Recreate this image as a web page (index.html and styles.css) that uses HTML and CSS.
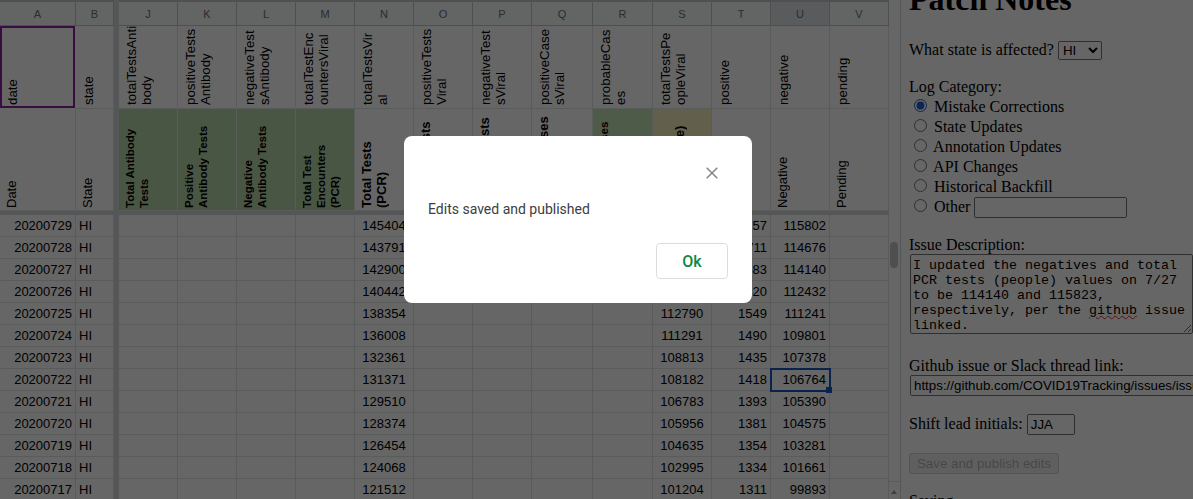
FILE: index.html
```html
<!DOCTYPE html>
<html lang="en-US">
<head>
  <meta charset="utf-8">
  <title>Patch Notes</title>
  <link rel="stylesheet" href="styles.css">
</head>
<body>
  <div class="page">
    <table class="sheet">
      <colgroup>
        <col class="c-a"><col class="c-b"><col class="c-bar">
        <col class="c-n"><col class="c-n"><col class="c-n"><col class="c-n"><col class="c-n"><col class="c-n"><col class="c-n">
        <col class="c-q"><col class="c-r"><col class="c-n"><col class="c-n"><col class="c-n"><col class="c-n">
      </colgroup>
      <tr class="letters">
        <td>A</td><td>B</td><td class="bar"></td><td>J</td><td>K</td><td>L</td><td>M</td><td>N</td><td>O</td><td>P</td><td>Q</td><td>R</td><td>S</td><td>T</td><td class="active">U</td><td>V</td>
      </tr>
      <tr class="keys">
        <td class="picked"><div class="rot">date</div></td>
        <td><div class="rot">state</div></td>
        <td class="bar"></td>
        <td><div class="rot">totalTestsAnti<br>body</div></td>
        <td><div class="rot">positiveTests<br>Antibody</div></td>
        <td><div class="rot">negativeTest<br>sAntibody</div></td>
        <td><div class="rot">totalTestEnc<br>ountersViral</div></td>
        <td><div class="rot">totalTestsVir<br>al</div></td>
        <td><div class="rot">positiveTests<br>Viral</div></td>
        <td><div class="rot">negativeTest<br>sViral</div></td>
        <td><div class="rot">positiveCase<br>sViral</div></td>
        <td><div class="rot">probableCas<br>es</div></td>
        <td><div class="rot">totalTestsPe<br>opleViral</div></td>
        <td><div class="rot">positive</div></td>
        <td><div class="rot">negative</div></td>
        <td><div class="rot">pending</div></td>
      </tr>
      <tr class="titles">
        <td><div class="rot">Date</div></td>
        <td><div class="rot">State</div></td>
        <td class="bar"></td>
        <td class="green"><div class="rot small">Total Antibody<br>Tests</div></td>
        <td class="green"><div class="rot small">Positive<br>Antibody Tests</div></td>
        <td class="green"><div class="rot small">Negative<br>Antibody Tests</div></td>
        <td class="green"><div class="rot small">Total Test<br>Encounters<br>(PCR)</div></td>
        <td><div class="rot bold">Total Tests<br>(PCR)</div></td>
        <td><div class="rot bold">Positive Tests</div></td>
        <td><div class="rot bold">Negative Tests</div></td>
        <td><div class="rot bold">Positive Cases</div></td>
        <td class="green light"><div class="rot small">Probable Cases</div></td>
        <td class="sand"><div class="rot bold">Total Tests<br>(PCR People)</div></td>
        <td><div class="rot">Positive</div></td>
        <td><div class="rot">Negative</div></td>
        <td><div class="rot">Pending</div></td>
      </tr>
      <tr class="freeze">
        <td class="bar" colspan="16"></td>
      </tr>
      <tr><td class="num">20200729</td><td>HI</td><td class="bar"></td><td></td><td></td><td></td><td></td><td class="mid">145404</td><td></td><td></td><td></td><td></td><td></td><td class="num">1757</td><td class="num">115802</td><td></td></tr>
      <tr><td class="num">20200728</td><td>HI</td><td class="bar"></td><td></td><td></td><td></td><td></td><td class="mid">143791</td><td></td><td></td><td></td><td></td><td></td><td class="num">1711</td><td class="num">114676</td><td></td></tr>
      <tr><td class="num">20200727</td><td>HI</td><td class="bar"></td><td></td><td></td><td></td><td></td><td class="mid">142900</td><td></td><td></td><td></td><td></td><td></td><td class="num">1683</td><td class="num">114140</td><td></td></tr>
      <tr><td class="num">20200726</td><td>HI</td><td class="bar"></td><td></td><td></td><td></td><td></td><td class="mid">140442</td><td></td><td></td><td></td><td></td><td></td><td class="num">1620</td><td class="num">112432</td><td></td></tr>
      <tr><td class="num">20200725</td><td>HI</td><td class="bar"></td><td></td><td></td><td></td><td></td><td class="mid">138354</td><td></td><td></td><td></td><td></td><td class="mid">112790</td><td class="num">1549</td><td class="num">111241</td><td></td></tr>
      <tr><td class="num">20200724</td><td>HI</td><td class="bar"></td><td></td><td></td><td></td><td></td><td class="mid">136008</td><td></td><td></td><td></td><td></td><td class="mid">111291</td><td class="num">1490</td><td class="num">109801</td><td></td></tr>
      <tr><td class="num">20200723</td><td>HI</td><td class="bar"></td><td></td><td></td><td></td><td></td><td class="mid">132361</td><td></td><td></td><td></td><td></td><td class="mid">108813</td><td class="num">1435</td><td class="num">107378</td><td></td></tr>
      <tr><td class="num">20200722</td><td>HI</td><td class="bar"></td><td></td><td></td><td></td><td></td><td class="mid">131371</td><td></td><td></td><td></td><td></td><td class="mid">108182</td><td class="num">1418</td><td class="num current">106764<span class="handle"></span></td><td></td></tr>
      <tr><td class="num">20200721</td><td>HI</td><td class="bar"></td><td></td><td></td><td></td><td></td><td class="mid">129510</td><td></td><td></td><td></td><td></td><td class="mid">106783</td><td class="num">1393</td><td class="num">105390</td><td></td></tr>
      <tr><td class="num">20200720</td><td>HI</td><td class="bar"></td><td></td><td></td><td></td><td></td><td class="mid">128374</td><td></td><td></td><td></td><td></td><td class="mid">105956</td><td class="num">1381</td><td class="num">104575</td><td></td></tr>
      <tr><td class="num">20200719</td><td>HI</td><td class="bar"></td><td></td><td></td><td></td><td></td><td class="mid">126454</td><td></td><td></td><td></td><td></td><td class="mid">104635</td><td class="num">1354</td><td class="num">103281</td><td></td></tr>
      <tr><td class="num">20200718</td><td>HI</td><td class="bar"></td><td></td><td></td><td></td><td></td><td class="mid">124068</td><td></td><td></td><td></td><td></td><td class="mid">102995</td><td class="num">1334</td><td class="num">101661</td><td></td></tr>
      <tr><td class="num">20200717</td><td>HI</td><td class="bar"></td><td></td><td></td><td></td><td></td><td class="mid">121512</td><td></td><td></td><td></td><td></td><td class="mid">101204</td><td class="num">1311</td><td class="num">99893</td><td></td></tr>
    </table>

    <div class="vscroll">
      <div class="thumb"></div>
      <div class="arrow"></div>
    </div>

    <form class="panel">
      <h1>Patch Notes</h1>

      <div class="state-row">
        What state is affected?
        <select class="state-select"><option>HI</option></select>
      </div>

      <div class="log-title">Log Category:</div>
      <label class="opt"><input type="radio" name="cat" checked> Mistake Corrections</label>
      <label class="opt"><input type="radio" name="cat"> State Updates</label>
      <label class="opt"><input type="radio" name="cat"> Annotation Updates</label>
      <label class="opt"><input type="radio" name="cat"> API Changes</label>
      <label class="opt"><input type="radio" name="cat"> Historical Backfill</label>
      <label class="opt"><input type="radio" name="cat"> Other <input type="text" class="other-input"></label>

      <div class="issue-title">Issue Description:</div>
      <div class="issue-box">I updated the negatives and total PCR tests (people) values on 7/27 to be 114140 and 115823, respectively, per the <span class="typo">github</span> issue linked.</div>

      <div class="link-title">Github issue or Slack thread link:</div>
      <input type="text" class="link-input" value="https://github.com/COVID19Tracking/issues/issues/1000">

      <div class="lead-row">Shift lead initials: <input type="text" class="lead-input" value="JJA"></div>

      <button type="button" class="save" disabled>Save and publish edits</button>

      <div class="saving">Saving</div>
    </form>
  </div>

  <div class="overlay"></div>
  <div class="modal">
    <div class="modal-top">
      <svg class="close" width="12" height="12" viewBox="0 0 12 12"><path d="M.7.7l10.6 10.6M11.3.7L.7 11.3" stroke="#80868b" stroke-width="1.5" fill="none"/></svg>
    </div>
    <div class="modal-text">Edits saved and published</div>
    <div class="modal-foot"><button type="button" class="ok">Ok</button></div>
  </div>
</body>
</html>
```

FILE: styles.css
```css
html, body {margin: 0; height: 499px; overflow: hidden; background: #fff;}
body {position: relative; font-family: "Liberation Serif", serif; font-size: 16px; color: #000;}

.page {display: flex; height: 499px; overflow: hidden;}

/* spreadsheet */
.sheet {flex: none; width: 889px; height: 500px; table-layout: fixed; border-collapse: separate; border-spacing: 0; font-family: "Liberation Sans", Arial, sans-serif; font-size: 13px;}
.c-a {width: 76px;}
.c-b {width: 38px;}
.c-bar {width: 5px;}
.c-n {width: 59px;}
.c-q {width: 61px;}
.c-r {width: 60px;}
.sheet td {box-sizing: border-box; height: 22px; padding: 0 3px; border-right: 1px solid #e2e3e3; border-bottom: 1px solid #e2e3e3; overflow: hidden; white-space: nowrap; position: relative;}
.sheet td.bar {background: #d5d7dc; padding: 0; border-color: #d5d7dc;}
.letters td {height: 26px; border-top: 2px solid #c8c9ca; border-right-color: #c4c5c6; border-bottom-color: #c4c5c6; background: #f8f9fa; color: #6d7175; font-size: 11px; text-align: center;}
.letters td.active {background: #dfe3e8;}
.keys td {height: 83px; vertical-align: bottom; padding: 0 0 3px 5px;}
.keys .rot {font-size: 13.3px;}
.titles td {height: 102px; vertical-align: bottom; padding: 0 0 2px 4px;}
.freeze td {height: 4px; padding: 0; border: 0;}
.sheet td.picked {box-shadow: inset 0 0 0 2px #8e1fa5; border-color: transparent;}
.rot {writing-mode: vertical-rl; transform: rotate(180deg); line-height: 15px; height: 78px;}
.titles .rot {height: 96px;}
.titles .small {font-size: 11.5px; font-weight: bold; line-height: 14px;}
.titles .bold {font-size: 13px; font-weight: bold; line-height: 15px;}
.titles td.green {background: #b6d7a8; padding-left: 4px;}
.titles td.light {background: #c4e4b6;}
.titles td.sand {background: #f4efbe;}
.num {text-align: right;}
.mid {text-align: center;}
.sheet td.current {outline: 2px solid #1a56c4; outline-offset: -1px; overflow: visible; z-index: 1;}
.handle {position: absolute; right: -3px; bottom: -3px; width: 6px; height: 6px; background: #1a56c4;}

.vscroll {flex: none; width: 12px; height: 499px; box-sizing: border-box; border-right: 1px solid #d5d7dc; position: relative; background: #fff;}
.thumb {position: absolute; left: 1px; top: 242px; width: 8px; height: 26px; border-radius: 4px; background: #c4c5c6;}
.arrow {position: absolute; left: 0; right: 0; bottom: 0; height: 17px; border-top: 1px solid #e2e3e3;}
.arrow::after {content: ""; position: absolute; left: 2px; top: 5px; border: 3px solid transparent; border-bottom: 4px solid #a0a0a0;}

/* patch notes form */
.panel {flex: 1; min-width: 0; padding-left: 8px; overflow: hidden;}
.panel h1 {margin: -19px 0 23px; font-size: 32px; line-height: 37px; white-space: nowrap;}
.panel input, .panel select, .panel button {font-family: "Liberation Sans", Arial, sans-serif; font-size: 13.33px;}
.panel input[type=radio] {accent-color: #1a5fd0;}
.state-row {height: 20px;}
.state-select {width: 44px; height: 19px;}
.log-title {margin-top: 17px; line-height: 18px;}
.opt {display: block; height: 20px; line-height: 20px; white-space: nowrap;}
.other-input {width: 153px; height: 21px; box-sizing: border-box;}
.issue-title {margin-top: 20px; line-height: 18px;}
.issue-box {box-sizing: border-box; width: 283px; height: 80px; margin-left: 1px; padding: 3px 2px 1px; border: 1px solid #767676; border-radius: 2px; font-family: "Liberation Mono", monospace; font-size: 13.33px; line-height: 15px; overflow: hidden; resize: both;}
.typo {text-decoration: underline wavy #d9342b 1px;}
.link-title {margin-top: 23px; line-height: 18px;}
.link-input {display: block; box-sizing: border-box; width: 340px; height: 21px; margin: 0 0 0 1px;}
.lead-row {margin-top: 18px; white-space: nowrap;}
.lead-input {width: 48px; height: 21px; box-sizing: border-box;}
.save {display: block; margin-top: 18px; height: 21px; width: 150px; padding: 0;}
.saving {margin-top: 18px;}

/* dialog */
.overlay {position: absolute; inset: 0; z-index: 5; background: rgba(0, 0, 0, .6);}
.modal {position: absolute; z-index: 6; left: 404px; top: 136px; width: 348px; height: 167px; box-sizing: border-box; padding: 31px 24px 24px; background: #fff; border-radius: 8px; font-family: Roboto, Arial, sans-serif;}
.modal-top {display: flex; justify-content: flex-end; padding-right: 10px; height: 12px;}
.close {display: block;}
.modal-text {margin-top: 20px; font-size: 14px; line-height: 20px; color: #3c4043;}
.modal-foot {display: flex; justify-content: flex-end; margin-top: 24px;}
.ok {width: 72px; height: 36px; background: #fff; border: 1px solid #dadce0; border-radius: 4px; color: #0b8a43; font-family: Roboto, Arial, sans-serif; font-size: 16px; font-weight: 500;}
```
